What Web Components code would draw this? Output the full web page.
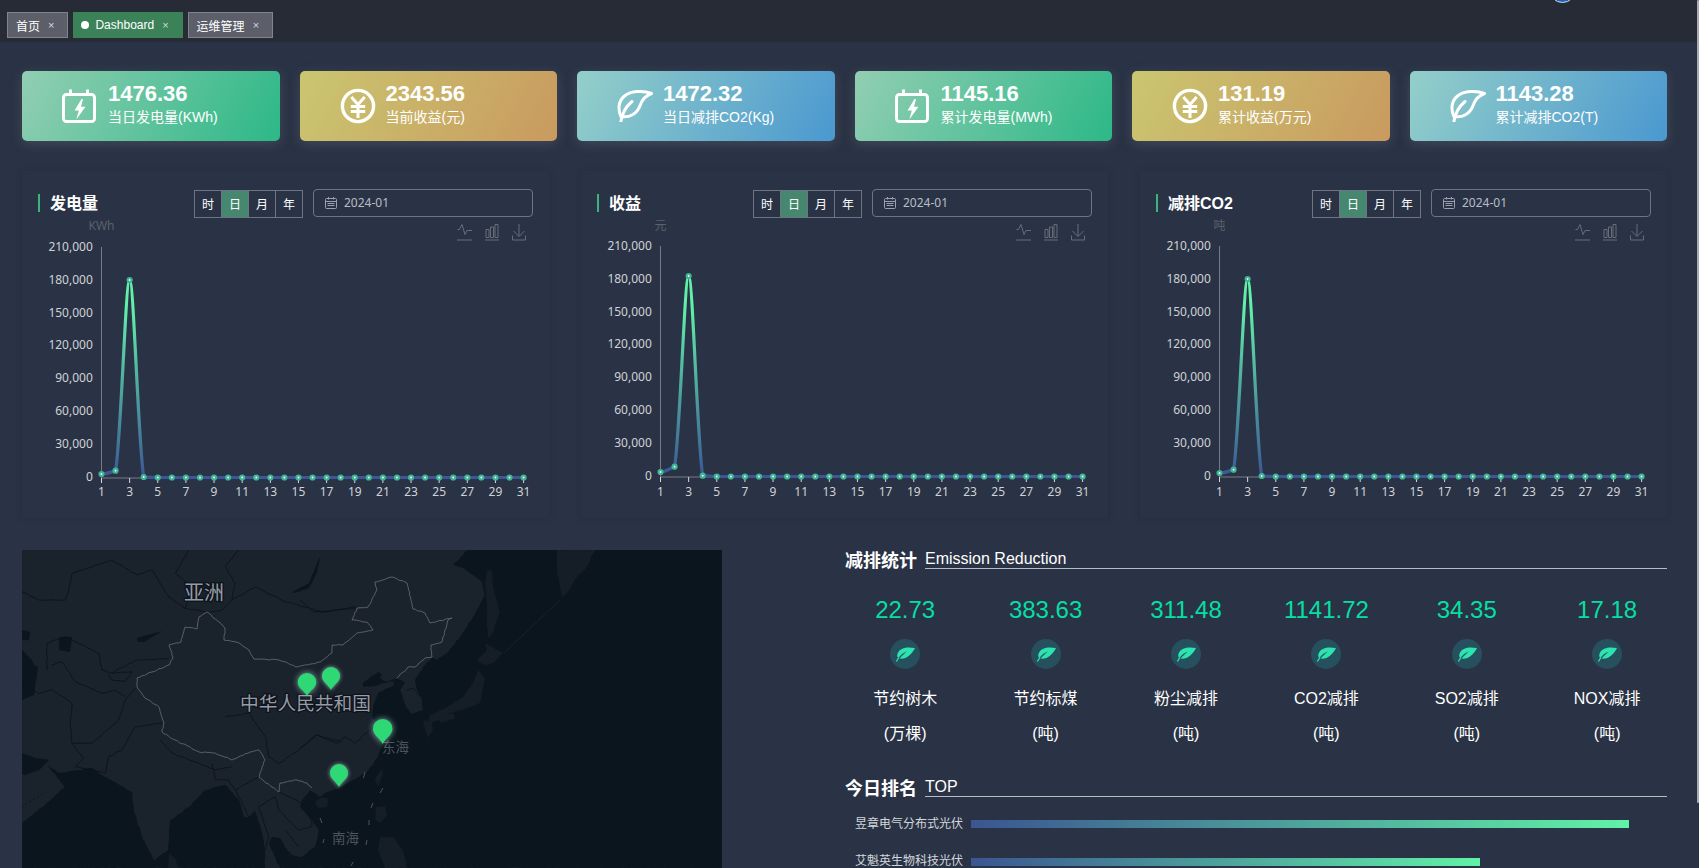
<!DOCTYPE html>
<html lang="zh-CN">
<head>
<meta charset="utf-8">
<title>Dashboard</title>
<style>
html,body{margin:0;padding:0;width:1699px;height:868px;overflow:hidden;background:#2a3345;color:#fff;font-family:"Liberation Sans","Noto Sans CJK SC",sans-serif}
</style>
</head>
<body>
<dash-app>
  <tab-bar slot="top">
    <tab-item>首页</tab-item>
    <tab-item active>Dashboard</tab-item>
    <tab-item>运维管理</tab-item>
  </tab-bar>
  <stat-card slot="cards" icon="power" tone="green" value="1476.36">当日发电量(KWh)</stat-card>
  <stat-card slot="cards" icon="yen" tone="gold" value="2343.56">当前收益(元)</stat-card>
  <stat-card slot="cards" icon="leaf" tone="blue" value="1472.32">当日减排CO2(Kg)</stat-card>
  <stat-card slot="cards" icon="power" tone="green" value="1145.16">累计发电量(MWh)</stat-card>
  <stat-card slot="cards" icon="yen" tone="gold" value="131.19">累计收益(万元)</stat-card>
  <stat-card slot="cards" icon="leaf" tone="blue" value="1143.28">累计减排CO2(T)</stat-card>

  <chart-panel slot="charts" unit="KWh" shift="0" d1="256" d2="252.7" d3="62" d4="259">发电量</chart-panel>
  <chart-panel slot="charts" unit="元" shift="-1" d1="254" d2="248.7" d3="58" d4="257.7">收益</chart-panel>
  <chart-panel slot="charts" unit="吨" shift="-1" d1="255" d2="251.7" d3="61" d4="258">减排CO2</chart-panel>

  <geo-map slot="map"></geo-map>

  <section-head slot="side" sub="Emission Reduction">减排统计</section-head>
  <stat-grid slot="side">
    <stat-item value="22.73" unit="(万棵)">节约树木</stat-item>
    <stat-item value="383.63" unit="(吨)">节约标煤</stat-item>
    <stat-item value="311.48" unit="(吨)">粉尘减排</stat-item>
    <stat-item value="1141.72" unit="(吨)">CO2减排</stat-item>
    <stat-item value="34.35" unit="(吨)">SO2减排</stat-item>
    <stat-item value="17.18" unit="(吨)">NOX减排</stat-item>
  </stat-grid>
  <section-head slot="side" sub="TOP" class="rank">今日排名</section-head>
  <rank-row slot="side" first w="658">昱章电气分布式光伏</rank-row>
  <rank-row slot="side" w="509">艾魁英生物科技光伏</rank-row>
</dash-app>

<script>
function el(name, render){
  customElements.define(name, class extends HTMLElement{
    constructor(){super();this.attachShadow({mode:'open'});}
    connectedCallback(){this.shadowRoot.innerHTML=render(this);}
  });
}

el('dash-app',()=>`<style>
:host{display:block;width:1699px;height:868px;overflow:hidden;position:relative}
.content{display:flex;flex-direction:column;padding:29px 32px 0 22px}
.cards{display:grid;grid-template-columns:repeat(6,1fr);gap:20px}
.charts{display:grid;grid-template-columns:repeat(3,1fr);gap:32px;margin-top:30px}
.bottom{display:flex;justify-content:space-between;margin-top:32px}
.side{width:822px;display:flex;flex-direction:column}
.thumb{position:absolute;right:0;top:0;width:2px;height:803px;background:#a9abb0;border-radius:1px}
</style>
<slot name="top"></slot>
<div class="content">
  <div class="cards"><slot name="cards"></slot></div>
  <div class="charts"><slot name="charts"></slot></div>
  <div class="bottom"><slot name="map"></slot><div class="side"><slot name="side"></slot></div></div>
</div>
<div class="thumb"></div>`);

el('tab-bar',()=>`<style>
:host{display:flex;height:42px;box-sizing:border-box;padding:12px 0 0 7px;gap:5px;background:#272b35;position:relative;align-items:flex-start}
.avatar{position:absolute;left:1549px;top:-24px;width:27px;height:27px;border-radius:50%;background:#1f63b5;border:1px solid #cfe0f5;box-sizing:border-box}
</style><slot></slot><div class="avatar"></div>`);

el('tab-item',h=>{
  const a=h.hasAttribute('active');
  return `<style>
:host{display:flex;align-items:center;height:26px;box-sizing:border-box;font-size:12px;color:#fff;
  background:${a?'#3c8259':'#5c5f69'};border:1px solid ${a?'#3c8259':'#82858c'};padding:0 13px 0 ${a?7:8}px}
.dot{width:8px;height:8px;border-radius:50%;background:#fff;margin-right:6px}
.x{font-size:11px;margin-left:8px;color:#d5d7db;line-height:1}
</style>${a?'<span class="dot"></span>':''}<slot></slot><span class="x">×</span>`;
});

const ICONS={
 power:`<svg width="34" height="34" viewBox="0 0 34 34" fill="none" stroke="#fff" stroke-width="3"><rect x="1.5" y="5.5" width="31" height="27" rx="3"/><path d="M8.500 .5V6M25.500 .5V6"/><path d="M19.500 10 12.500 21.500h4.300L14.300 30.500 23.500 17.800h-4.500l2-7.800z" fill="#fff" stroke="none"/></svg>`,
 yen:`<svg width="36" height="36" viewBox="0 0 36 36" fill="none" stroke="#fff"><circle cx="18" cy="18" r="15.600" stroke-width="3.400"/><path d="M11.300 9 18 16.500 24.700 9M10.800 18.500H25.200M10.800 23.500H25.200M18 16.500V30" stroke-width="3" /></svg>`,
 leaf:`<svg width="36" height="32" viewBox="0 0 36 32" fill="none" stroke="#fff" stroke-width="3" stroke-linecap="round" stroke-linejoin="round"><path d="M34.500 3.500C26 .5 14 .5 7.500 6 1.500 11 .5 19 4 26.500c8 1.500 16-2 19.500-12C25.500 9 29 5.500 34.500 3.500Z"/><path d="M4 31C5 24 8.500 17 15 11.500"/></svg>`
};
const TONES={green:'#92ceb3,#2db887',gold:'#cac670,#c99a5f',blue:'#94cfc9,#4a98d0'};
el('stat-card',h=>`<style>
:host{display:flex;height:70px;box-sizing:border-box;padding:0 0 5px 40px;align-items:center;border-radius:5px;
  background:linear-gradient(118deg,${TONES[h.getAttribute('tone')]});box-shadow:0 3px 12px rgba(125,130,140,.28)}
.ic{width:46px;display:flex;align-items:center;margin-top:5px}
.v{font-size:22px;font-weight:700;line-height:26px;color:#fff}
.l{font-size:14px;line-height:20px;color:#fff}
</style><div class="ic">${ICONS[h.getAttribute('icon')]}</div>
<div><div class="v">${h.getAttribute('value')}</div><div class="l"><slot></slot></div></div>`);

el('chart-panel',h=>{
  const s=+h.getAttribute('shift'),y0=259.5+s,top=29+s,ax=79.5,step=14.07;
  const X=i=>+(ax+i*step).toFixed(2);
  const ys=[];for(let i=0;i<31;i++)ys.push(y0);
  ys[0]=+h.getAttribute('d1');ys[1]=+h.getAttribute('d2');ys[2]=+h.getAttribute('d3');ys[3]=+h.getAttribute('d4');
  const H1=ys[1]-ys[2],H3=ys[3]-ys[2];
  let d=`M${X(0)} ${ys[0]}C${X(0)+6} ${ys[0]} ${X(1)-5} ${ys[1]+1.5} ${X(1)} ${ys[1]}`;
  d+=`C${X(1)+5.4} ${ys[1]-.16*H1} ${X(2)-4.1} ${ys[2]} ${X(2)} ${ys[2]}`;
  d+=`C${X(2)+4.1} ${ys[2]} ${X(3)-5.4} ${ys[3]-.16*H3} ${X(3)} ${ys[3]}`;
  d+=`L${X(4)} ${ys[4]}L${X(30)} ${y0}`;
  let dots='',xl='';
  for(let i=0;i<31;i++){
    dots+=`<circle cx="${X(i)}" cy="${ys[i]}" r="2" fill="#f0fff9" stroke="#3fb497" stroke-width="2.2"/>`;
    if(i%2==0)xl+=`<path d="M${X(i)} ${y0+.5}v5" stroke="#d6d8dc"/><text x="${X(i)}" y="${277.5}" text-anchor="middle">${i+1}</text>`;
  }
  let yl='';
  ['0','30,000','60,000','90,000','120,000','150,000','180,000','210,000'].forEach((t,i)=>{
    yl+=`<text x="70.8" y="${y0-i*32.9+3+i/7}" text-anchor="end">${t}</text>`;
  });
  return `<style>
:host{display:block;height:347px;box-sizing:border-box;box-shadow:0 0 5px rgba(30,36,50,.45);background:#2a3345}
.head{display:flex;height:35px;box-sizing:border-box;padding:19px 16px 0;gap:10px;align-items:flex-start}
.title{flex:1;display:flex;align-items:center;height:18px;margin-top:4px;font-size:16px;font-weight:700;color:#fff}
.title i{display:block;width:2px;height:18px;background:#3cb37f;margin-right:10px}
.title span{display:block;margin-top:-2px}
.seg{display:flex;height:28px;border:1px solid #6e7482;box-sizing:border-box;width:109px}
.seg span{flex:1;display:flex;align-items:center;justify-content:center;font-size:12px;color:#fff;border-left:1px solid #6e7482;padding-bottom:2px;box-sizing:border-box}
.seg span:first-child{border-left:0}
.seg .on{background:#46886f}
.date{width:220px;height:28px;margin-top:-1px;box-sizing:border-box;border:1px solid #6e7482;border-radius:4px;display:flex;align-items:center;padding:0 0 1px 11px;gap:7px;
  font:12px "Noto Sans","Noto Sans CJK SC",sans-serif;color:#b9bdc6}
svg.plot{display:block}
svg.plot text{font:12px "Noto Sans","Noto Sans CJK SC",sans-serif;fill:#cfd2d6}
svg.plot .u{fill:#5b616d}
</style>
<div class="head">
  <div class="title"><i></i><span><slot></slot></span></div>
  <div class="seg"><span>时</span><span class="on">日</span><span>月</span><span>年</span></div>
  <div class="date"><svg width="12" height="12" viewBox="0 0 12 12" fill="none" stroke="#9aa0ac"><rect x=".5" y="1.500" width="11" height="10" rx="1"/><path d="M.5 4.500h11M3.500 0v2.500M8.500 0v2.500M2.500 6.500h7M2.500 8.500h7" /></svg><span>2024-01</span></div>
</div>
<svg class="plot" width="527" height="312" viewBox="0 -12 527 312">
  <defs><linearGradient id="g" gradientUnits="userSpaceOnUse" x1="0" y1="${y0}" x2="0" y2="${y0-170}"><stop offset="0" stop-color="#3b5795"/><stop offset="1" stop-color="#60f0a8"/></linearGradient></defs>
  <g fill="none" stroke="#666d78" transform="translate(0 -1)">
    <path d="M435 23h15M435.500 12.500h2l2.500-5 3 10 2-4h5"/>
    <path d="M463 23h14M464 12.500h3v8h-3zM468.500 10h3v10.500h-3zM473 7.500h3v13h-3z"/>
    <path d="M497 7v12M491.500 14l5.500 5.500 5.500-5.500M490.500 18.500v4.500h13v-4.500"/>
  </g>
  <text class="u" x="${ax}" y="12" text-anchor="middle">${h.getAttribute('unit')}</text>
  <path d="M${ax} ${top}V${y0+.5}H${X(30)}" fill="none" stroke="#767a84"/>
  ${yl}${xl}
  <path d="${d}" fill="none" stroke="url(#g)" stroke-width="3.200"/>
  ${dots}
</svg>`;
});

/* ---------- map ---------- */
let seed=7;
function rnd(){seed=(seed*16807)%2147483647;return seed/2147483647-.5;}
function parse(s,f){return s.trim().split(/\s+/).map(p=>{const[a,b]=p.split(',').map(Number);return f?f(a,b):[a,b];});}
const z9=(a,b)=>[a/3,b/3], z10=(a,b)=>[278+a/3,b/3];
function wig(pts,amp,n){
  const o=[];
  for(let i=0;i<pts.length-1;i++){
    const[a,b]=pts[i],[c,d]=pts[i+1];
    const len=Math.hypot(c-a,d-b),m=Math.max(1,Math.round(len/(n||4)));
    for(let k=0;k<m;k++){const t=k/m;const j=k?amp:0;o.push([(a+(c-a)*t+rnd()*j).toFixed(1),(b+(d-b)*t+rnd()*j).toFixed(1)]);}
  }
  const l=pts[pts.length-1];o.push([l[0],l[1]]);
  return 'M'+o.map(p=>p.join(' ')).join('L');
}
const SEA_W=parse(`0,273 20,257 43,237 25,215 37,223 70,218 83,227 110,242 112,260 120,287 132,310 146,300 148,270 167,257 183,240 203,235 217,250 222,267 227,267 233,260 240,283 243,300 243,318 0,318 0,273`);
const SEA_E=parse(`445,0 438,8 431,15 441,18 451,25 460,32 463,45 451,67 438,87 425,103 415,110 410,108 403,115 393,130 395,140 400,150 401,160 390,164 384,157 378,140 383,133 375,128 364,132 358,128 360,124 356,122 341,133 341,137 353,136 371,131 372,135 356,143 351,155 350,167 358,177 361,193 356,207 345,222 331,230 318,238 305,242 298,247 288,240 278,253 280,250 278,257 290,270 297,280 293,297 280,307 270,305 263,297 258,288 250,287 247,293 252,305 258,318 700,318 700,0 445,0`);
const ISLES=[
`535,0 573,0 565,17 555,27 545,43 540,47 535,20`,
`465,20 470,20 471,37 478,63 475,70 471,83 466,88 465,73 465,57 463,33`,
`463,93 481,103 471,113 463,115 455,110 465,100`,
`456,120 463,128 458,153 441,160 428,163 418,170 406,173 408,165 425,157 441,147 451,133`,
`403,170 410,172 411,180 406,188 401,173`,
`416,168 431,163 433,168 419,173`,
`353,230 360,218 361,223 356,237`,
`293,252 300,247 306,248 305,257 296,258`,
`354,257 363,256 365,265 358,273 353,270`,
`358,287 371,287 381,300 385,318 363,318 356,300`,
`147,303 153,308 157,318 146,318`
];
const LAKES=[
`270,42 287,33 298,7 295,23 287,38 272,43`,
`0,100 10,110 15,125 12,145 0,150`,
`0,80 8,82 7,90 0,90`,
`37,87 50,87 48,102 37,100`,
`115,88 140,81 122,92 116,92`,
`8,113 16,117 15,124 8,121`,
`0,203 13,208 27,210 17,220 3,225 0,224`
];
const CN=parse(`374.7,128.3 386,117 393,117 403,108 410,107 409,95 420,92 426,70 430,68 408,73 403,63 391,59 385,33 370,27 353,32 355,40 346,57 335,58 330,70 345,72 351,80 335,83 321,95 310,95 310,103 298,112 275,117 257,110 232,109 227,100 217,93 202,90 203,78 197,72 185,62 177,67 175,79 163,77 159,92 147,95 151,107 147,115 130,122 115,128 115,137 122,147 137,157 142,173 140,182 153,190 177,202 193,203 210,210 228,202 237,200 243,210 237,227 250,237 257,242 258,233 275,230 285,233 290,238`);
const LINES=[
[z9,`0,125 50,150 130,150 140,120 150,70 270,30 345,75 390,60 440,140 490,175 555,187`],
[z9,`555,187 600,180 630,150 700,110 790,155 900,185 1005,174`],
[z9,`500,0 460,70 510,110 490,175`],
[z9,`650,0 610,50 640,100 630,150`],
[z9,`75,360 75,280 130,260 230,310 240,360 265,370 345,330 440,325`],
[z9,`0,400 50,430 90,420 150,460 145,520 150,580 210,580 290,510 310,450 345,410`],
[z9,`90,345 120,335 160,395 240,430 280,420 310,440`],
[z9,`150,580 185,625 160,650 250,670 260,620 300,600 340,530 420,520`],
[z9,`415,570 450,610 530,640 580,660 630,650`],
[z9,`570,640 580,690 620,690 640,720 710,680`],
[z9,`680,800 650,740 640,720`],
[z9,`710,770 760,740 770,780 830,840 870,830 860,770 770,725`],
[z9,`710,770 740,860 730,900`],
[z9,`790,840 830,890`],
[z9,`610,500 680,490 730,560 740,620 770,640 830,600 880,555 960,575`],
[z9,`270,370 330,365 310,395 270,390 260,375`],
[z10,`0,595 50,555 110,580 135,560 165,580 220,530`],
[z10,`0,150 40,185 80,185 165,170`],
[z10,`360,440 340,415 320,420`]
];
const pin=(cx,top,tip,w,glow)=>{
  const r=w/2,cy=top+r;
  return `<path d="M${cx} ${tip}C${cx-3} ${tip-6} ${cx-r} ${cy+6} ${cx-r} ${cy}A${r} ${r} 0 0 1 ${cx+r} ${cy}C${cx+r} ${cy+6} ${cx+3} ${tip-6} ${cx} ${tip}Z" fill="#2ed975" style="filter:drop-shadow(0 0 ${glow}px rgba(190,255,235,.65))"/>`;
};
el('geo-map',()=>{
  const sea='#0b151d',land='#1a222c',isle='#151d26';
  const coast=[SEA_W,SEA_E].map(p=>`<path d="${wig(p.slice(0,-1),.9,3)}Z" fill="${sea}"/>`).join('');
  const isles=ISLES.map(s=>`<path d="${wig(parse(s),.8,3)}Z" fill="${isle}"/>`).join('');
  const lakes=LAKES.map(s=>`<path d="${wig(parse(s),.5,3)}Z" fill="${sea}"/>`).join('');
  const lines=LINES.map(([f,s])=>`<path d="${wig(parse(s,f),.9,3)}"/>`).join('');
  const dash=[[343,222,341.5,228],[361,238,358,243],[351,253,349,258],[347,270,347,275],[345,290,344,295],[331,312,329,316],[298,268,300,273],[302,289,301,293]]
    .map(a=>`<path d="M${a[0]} ${a[1]}L${a[2]} ${a[3]}"/>`).join('');
  return `<style>
:host{display:block;width:700px;height:318px;overflow:hidden;background:${land}}
svg{display:block}
text{font-family:"Noto Sans CJK SC","Noto Sans",sans-serif}
.big{fill:#969ba6;stroke:#0d131a;stroke-width:2.500px;paint-order:stroke}
.dim{fill:#4d545f}
</style>
<svg width="700" height="318" viewBox="0 0 700 318">
  ${coast}${isles}${lakes}
  <path d="M538 50 482 103" fill="none" stroke="#1a222c"/>
  <g fill="none" stroke="#0c1219" stroke-width=".9">${lines}</g>
  <path d="M46 285 68 222 M0 257 26 240" fill="none" stroke="#0c1219" stroke-dasharray="1.500 3"/>
  <path d="${wig(CN,1,2.5)}" fill="none" stroke="#6a6f76" stroke-width=".8"/>
  <g fill="none" stroke="#4d545e" stroke-width="1">${dash}</g>
  <text class="big" x="182" y="50" font-size="20" text-anchor="middle">亚洲</text>
  <text class="big" x="283.5" y="160" font-size="18.7" text-anchor="middle">中华人民共和国</text>
  <text class="dim" x="373.5" y="202" font-size="13.5" text-anchor="middle">东海</text>
  <text class="dim" x="323.5" y="293" font-size="13.5" text-anchor="middle">南海</text>
  ${pin(285,123,146,18.5,3)}${pin(309,117,140,18,2)}${pin(360.7,169,194,19.5,3)}${pin(317,214,237,18,2)}
</svg>`;
});

el('section-head',h=>`<style>
:host{display:flex;gap:8px;height:20px;align-items:flex-start}
.t{font-size:18px;font-weight:700;line-height:22px;color:#fff;width:72px;height:20px;white-space:nowrap}
.s{flex:1;font-size:16px;line-height:16px;padding:1px 0 1px;border-bottom:1px solid #b8bcc4;color:#fff}
:host(.rank){margin-top:27px}
</style><div class="t"><slot></slot></div><div class="s">${h.getAttribute('sub')}</div>`);

el('stat-grid',()=>`<style>
:host{display:grid;grid-template-columns:repeat(6,140.4px);margin:26px 0 0 -10px;width:842.4px}
</style><slot></slot>`);

el('stat-item',h=>`<style>
:host{display:flex;flex-direction:column;align-items:center;text-align:center;color:#fff}
.v{font-size:24px;line-height:28px;color:#06dfa3}
.c{width:30px;height:30px;border-radius:50%;background:#26505e;margin-top:15px;display:flex;align-items:center;justify-content:center}
.l{font-size:16px;line-height:34.7px;margin-top:13px}
.l+.l{margin-top:0}
</style><div class="v">${h.getAttribute('value')}</div>
<div class="c"><svg width="20" height="15" viewBox="0 0 20 15"><path d="M20 1C12-.5 5.500 .8 3 5.500 1.800 8 2 10 3.200 11 6 7.500 9 5.500 12 4.500 9.500 6.500 7 8.500 4.500 11.500 11 12.500 16 8.500 20 1Z" fill="#2de3b0"/><path d="M1.500 14.500C2 13 3 11.800 4 10.500" stroke="#2de3b0" fill="none" stroke-width="1.200"/></svg></div>
<div class="l"><slot></slot></div><div class="l">${h.getAttribute('unit')}</div>`);

el('rank-row',h=>`<style>
:host{display:grid;grid-template-columns:118px 1fr;column-gap:8px;align-items:center;height:13px;line-height:13px;font-size:12px;color:#d3d6db;margin-top:${h.hasAttribute('first')?'19.5px':'24.5px'}}
.n{text-align:right;white-space:nowrap}
.b{height:8px;width:${h.getAttribute('w')}px;background:linear-gradient(90deg,#3b5591,#61f2a7)}
</style><div class="n"><slot></slot></div><div class="b"></div>`);
</script>
</body>
</html>
